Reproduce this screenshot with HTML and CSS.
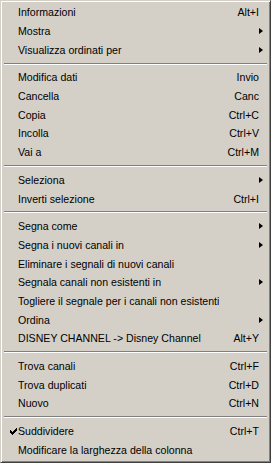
FILE: index.html
```html
<!DOCTYPE html>
<html>
<head>
<meta charset="utf-8">
<link rel="stylesheet" href="styles.css">
</head>
<body>
<div class="menu">
  <div class="item"><span class="label">Informazioni</span><span class="key">Alt+I</span></div>
  <div class="item"><span class="label">Mostra</span><span class="arrow"></span></div>
  <div class="item"><span class="label">Visualizza ordinati per</span><span class="arrow"></span></div>
  <div class="sep"></div>
  <div class="item"><span class="label">Modifica dati</span><span class="key">Invio</span></div>
  <div class="item"><span class="label">Cancella</span><span class="key">Canc</span></div>
  <div class="item"><span class="label">Copia</span><span class="key">Ctrl+C</span></div>
  <div class="item"><span class="label">Incolla</span><span class="key">Ctrl+V</span></div>
  <div class="item"><span class="label">Vai a</span><span class="key">Ctrl+M</span></div>
  <div class="sep"></div>
  <div class="item"><span class="label">Seleziona</span><span class="arrow"></span></div>
  <div class="item"><span class="label">Inverti selezione</span><span class="key">Ctrl+I</span></div>
  <div class="sep"></div>
  <div class="item"><span class="label">Segna come</span><span class="arrow"></span></div>
  <div class="item"><span class="label">Segna i nuovi canali in</span><span class="arrow"></span></div>
  <div class="item"><span class="label">Eliminare i segnali di nuovi canali</span></div>
  <div class="item"><span class="label">Segnala canali non esistenti in</span><span class="arrow"></span></div>
  <div class="item"><span class="label">Togliere il segnale per i canali non esistenti</span></div>
  <div class="item"><span class="label">Ordina</span><span class="arrow"></span></div>
  <div class="item"><span class="label">DISNEY CHANNEL -&gt; Disney Channel</span><span class="key">Alt+Y</span></div>
  <div class="sep"></div>
  <div class="item"><span class="label">Trova canali</span><span class="key">Ctrl+F</span></div>
  <div class="item"><span class="label">Trova duplicati</span><span class="key">Ctrl+D</span></div>
  <div class="item"><span class="label">Nuovo</span><span class="key">Ctrl+N</span></div>
  <div class="sep"></div>
  <div class="item"><svg class="check" width="7" height="7" viewBox="0 0 7 7" shape-rendering="crispEdges"><path d="M6 0h1v1h-1z M5 1h2v1h-2z M0 2h1v1h-1z M4 2h3v1h-3z M0 3h2v1h-2z M3 3h3v1h-3z M0 4h5v1h-5z M1 5h3v1h-3z M2 6h1v1h-1z" fill="#000"/></svg><span class="label">Suddividere</span><span class="key">Ctrl+T</span></div>
  <div class="item"><span class="label">Modificare la larghezza della colonna</span></div>
</div>
</body>
</html>
```

FILE: styles.css
```css
html, body {
  margin: 0;
  padding: 0;
  background: #d4d0c8;
}
.menu {
  box-sizing: border-box;
  width: 271px;
  height: 463px;
  background: #d4d0c8;
  border: 1px solid;
  border-color: #d4d0c8 #404040 #404040 #d4d0c8;
  box-shadow: inset 1px 1px #ffffff, inset -1px -1px #808080;
  padding: 2px 2px;
  display: flex;
  flex-direction: column;
  font-family: "Liberation Sans", Arial, sans-serif;
  font-size: 10.6px;
  color: #000;
}
.item {
  position: relative;
  height: 18.7px;
  display: flex;
  align-items: center;
  padding: 0 9px 0 15px;
  flex: none;
}
.label {
  flex: 1;
  white-space: nowrap;
}
.key {
  white-space: nowrap;
}
.arrow {
  width: 0;
  height: 0;
  border-top: 3.5px solid transparent;
  border-bottom: 3.5px solid transparent;
  border-left: 4px solid #000;
  margin-right: -4px;
}
.check {
  position: absolute;
  left: 7px;
  top: 6px;
}
.sep {
  flex: none;
  height: 9px;
  display: flex;
  align-items: center;
  padding: 0 1px;
}
.sep::before {
  content: "";
  display: block;
  width: 100%;
  border-top: 1px solid #808080;
  border-bottom: 1px solid #ffffff;
  box-sizing: border-box;
  height: 2px;
}
```
